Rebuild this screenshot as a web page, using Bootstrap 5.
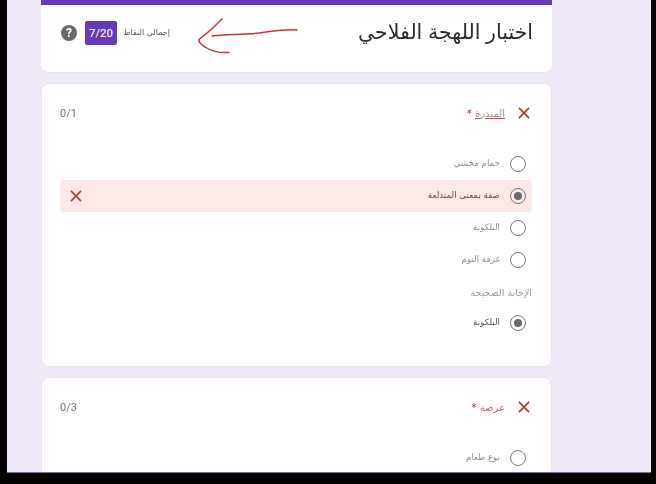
<!DOCTYPE html>
<html lang="ar">
<head>
<meta charset="utf-8">
<title>اختبار اللهجة الفلاحي</title>
<link rel="stylesheet" href="https://cdn.jsdelivr.net/npm/bootstrap@5.3.0/dist/css/bootstrap.min.css">
<style>
html,body{height:100%;background:#000;overflow:hidden}
body{font-family:"DejaVu Sans","Liberation Sans",sans-serif}
.frame{margin:0 5px 0 7px;height:473px;background:#efe9f8;overflow:hidden;padding:0 99px 0 34px;border-bottom:1px solid #8a6aa0;filter:blur(.3px)}
.sheet{background:#fff;border:1px solid #e6e3ec;border-radius:8px;margin-bottom:10px;padding:17px 19px 27px 18px}
.sheet-head{border:0;border-top:5px solid #673ab7;border-radius:0 0 8px 8px;height:73px;margin-bottom:10px;padding:0 19px 11px 20px;border-bottom:1px solid #e6e3ec}
.help-dot{width:16px;height:16px;border-radius:50%;background:#67696c;color:#fff;font:700 12px/16px "Roboto",sans-serif;text-align:center}
.score-chip{width:32px;height:24px;background:#673ab7;color:#f3eefa;border-radius:2px;font:500 11.500px/24px "Roboto",sans-serif;text-align:center}
.score-label{font-size:8px;color:#555;margin-left:5px;width:48px;white-space:nowrap}
.arrow-ink{width:104px;height:38px;margin-left:27px;margin-top:7px}
.quiz-title{font-family:"Liberation Sans","DejaVu Sans",sans-serif;font-size:20.500px;color:#2a2a2a;margin:-2px 0 0;font-weight:400;white-space:nowrap}
.q-head{height:24px}
.q-text{font-size:10px;color:#9a8f8f}
.q-text u{text-decoration-color:#d04a4a}
.q-red{color:#b06a6a}
.star{color:#c5221f}
.q-score{font:400 11px "Roboto",sans-serif;color:#70757a}
.opts{margin-top:23px}
.opt{height:32px;padding-right:6px;gap:10px;border-radius:4px;font-size:8.700px;color:#8c8c8c}
.opt-wrong{background:#fce8e6;color:#555;padding-left:10px}
.opt-good{color:#555}
.ring{width:16px;height:16px;flex:none;border:1.500px solid #74787c;border-radius:50%;display:flex;align-items:center;justify-content:center}
.ring i{display:block;width:8px;height:8px;border-radius:50%;background:#66696d}
.ans-label{height:20px;margin-top:7px;font-size:9.500px;color:#9a9a9a;line-height:20px}
.ans-row{margin-top:4px}
.mark-x{width:12px;height:12px;flex:none;margin:0 2px 0 0}
.q-gap{gap:13px}
</style>
</head>
<body>
<div class="frame">
  <div class="sheet sheet-head d-flex align-items-center">
    <div class="help-dot">?</div>
    <div class="score-chip ms-2">7/20</div>
    <div class="score-label" dir="rtl">إجمالي النقاط</div>
    <svg class="arrow-ink" viewBox="0 0 104 38" fill="none" stroke="#c8323c" stroke-width="1.500" stroke-linecap="round" stroke-linejoin="round"><path d="M25 1C18 8 8 17 2.500 21C1 23 3 26 8 29C14 33 24 35 32 34.500"/><path d="M15 18C30 16 44 17 62 15C76 13 90 11 100 12"/></svg>
    <h1 class="quiz-title ms-auto" dir="rtl">اختبار اللهجة الفلاحي</h1>
  </div>

  <div class="sheet" dir="rtl">
    <div class="q-head d-flex align-items-center justify-content-between">
      <div class="d-flex align-items-center q-gap">
        <svg class="mark-x" viewBox="0 0 13 13" stroke="#c5352f" stroke-width="1.900"><path d="M1 1L12 12M12 1L1 12"/></svg>
        <span class="q-text"><u>المندرة</u> <span class="star">*</span></span>
      </div>
      <span class="q-score" dir="ltr">0/1</span>
    </div>
    <div class="opts">
      <div class="opt d-flex align-items-center"><span class="ring"></span><span>حمام محشي</span></div>
      <div class="opt opt-wrong d-flex align-items-center"><span class="ring"><i></i></span><span>صفة بمعنى المتدلعة</span>
        <svg class="mark-x me-auto" viewBox="0 0 13 13" stroke="#c5352f" stroke-width="1.700"><path d="M1 1L12 12M12 1L1 12"/></svg></div>
      <div class="opt d-flex align-items-center"><span class="ring"></span><span>البلكونة</span></div>
      <div class="opt d-flex align-items-center"><span class="ring"></span><span>غرفة النوم</span></div>
    </div>
    <div class="ans-label">الإجابة الصحيحة</div>
    <div class="opt opt-good ans-row d-flex align-items-center"><span class="ring"><i></i></span><span>البلكونة</span></div>
  </div>

  <div class="sheet" dir="rtl">
    <div class="q-head d-flex align-items-center justify-content-between">
      <div class="d-flex align-items-center q-gap">
        <svg class="mark-x" viewBox="0 0 13 13" stroke="#c5352f" stroke-width="1.900"><path d="M1 1L12 12M12 1L1 12"/></svg>
        <span class="q-text q-red">عرصة <span class="star">*</span></span>
      </div>
      <span class="q-score" dir="ltr">0/3</span>
    </div>
    <div class="opts">
      <div class="opt d-flex align-items-center"><span class="ring"></span><span>نوع طعام</span></div>
    </div>
  </div>
</div>
<script src="https://cdn.jsdelivr.net/npm/bootstrap@5.3.0/dist/js/bootstrap.bundle.min.js"></script>
</body>
</html>
